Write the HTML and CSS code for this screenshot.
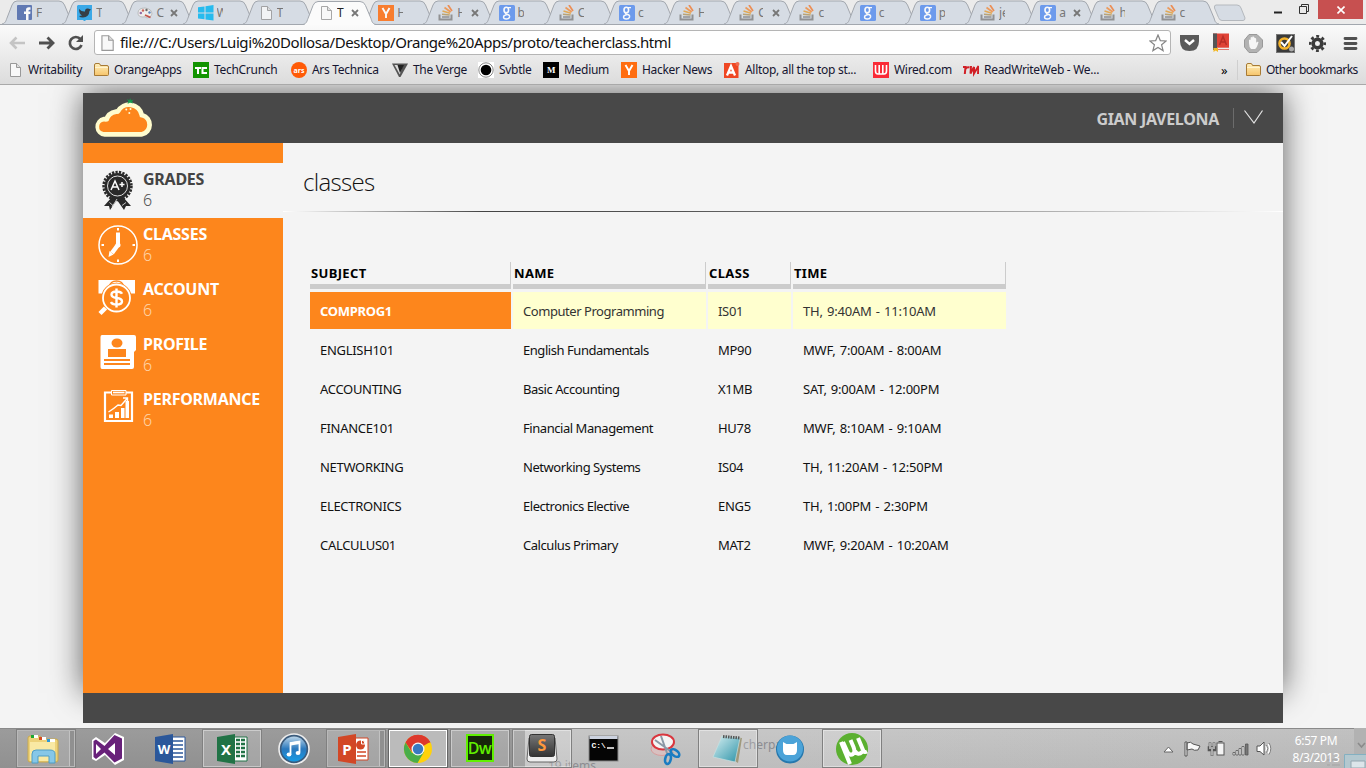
FILE: index.html
```html
<!DOCTYPE html>
<html lang="en">
<head>
<meta charset="utf-8">
<title>Classes</title>
<link rel="stylesheet" href="styles.css">
</head>
<body>
<svg class="defs" width="0" height="0">
  <defs>
    <linearGradient id="gGlass" x1="0" y1="0" x2="0" y2="1"><stop offset="0" stop-color="#b9d4e8"/><stop offset=".5" stop-color="#2a78bd"/><stop offset="1" stop-color="#159be6"/></linearGradient>
    <linearGradient id="gFolder" x1="0" y1="0" x2="0" y2="1"><stop offset="0" stop-color="#fff0bd"/><stop offset="1" stop-color="#f6c46a"/></linearGradient>
    <linearGradient id="gNote" x1="0" y1="0" x2="1" y2="1"><stop offset="0" stop-color="#d8f0f2"/><stop offset="1" stop-color="#2c93a8"/></linearGradient>
    <linearGradient id="gKey" x1="0" y1="0" x2="0" y2="1"><stop offset="0" stop-color="#777"/><stop offset="1" stop-color="#333"/></linearGradient>
  </defs>
  <symbol id="tab" viewBox="0 0 74 24"><path d="M0 24C4 23 4 20 5 18L10 5Q11.500 1 15 1H57Q61 1 62.500 5L68 18C69 21 69 23 73 24" stroke="#a2a7ae"/></symbol>
  <symbol id="page" viewBox="0 0 16 16"><path d="M3.500 1.500H9.500L13.500 5.500V14.500H3.500Z" fill="#f8f8f8" stroke="#999"/><path d="M9.500 1.500V5.500H13.500" fill="#ddd" stroke="#999"/></symbol>
  <symbol id="folder" viewBox="0 0 16 16"><path d="M1.500 13.500V3Q1.500 1.500 3 1.500H6Q7 1.500 7.500 3.500H14Q15.500 3.500 15.500 5V12.500Q15.500 13.500 14.500 13.500Z" fill="url(#gFolder)" stroke="#a77a35"/><path d="M2 5.500H15" stroke="#fff3cf"/></symbol>
  <symbol id="so" viewBox="0 0 16 16"><path d="M1.500 9.500V14.500H13.500V9.500" fill="none" stroke="#858585" stroke-width="2"/><path d="M4 12H11.500" stroke="#858585" stroke-width="1.500"/><path d="M4 9.300L11.700 10" stroke="#b79a60" stroke-width="1.600"/><path d="M4.500 6L12 8.300" stroke="#e5a13b" stroke-width="1.700"/><path d="M6.500 2.500L12.700 7" stroke="#f09045" stroke-width="1.700"/><path d="M10 0L14 6" stroke="#f0803c" stroke-width="1.700"/></symbol>
  <symbol id="goog" viewBox="0 0 16 16"><rect width="16" height="16" rx="1.500" fill="#5a8fee"/><ellipse cx="7.300" cy="5" rx="2.300" ry="2.700" fill="none" stroke="#fff" stroke-width="1.600"/><path d="M9 2.600H12M8 7.500Q5 8.500 7.500 9.300M8 9.300Q11 10 10.600 12Q10 14 7.300 14Q4.500 14 4.500 12Q4.700 10 8 9.500" fill="none" stroke="#fff" stroke-width="1.400"/></symbol>
  <symbol id="yc" viewBox="0 0 16 16"><rect width="16" height="16" fill="#ff6d10"/><path d="M4.500 3L8 9L11.500 3M8 8.500V13" fill="none" stroke="#fff" stroke-width="1.900"/></symbol>
  <symbol id="x" viewBox="0 0 8 8"><path d="M1 1L7 7M7 1L1 7" stroke="#777" stroke-width="1.800"/></symbol>
</svg>

<header class="chrome">
  <div class="tabstrip">
    <div class="tab"><svg class="shape"><use href="#tab"/></svg><svg class="fav" viewBox="0 0 16 16"><rect width="15" height="15" rx="1" fill="#4c68ab"/><path d="M9 15V9H7V6.500H9V5Q9 2.200 12 2.300H13.500V4.700H12.500Q11.500 4.700 11.500 5.700V6.500H13.500L13.200 9H11.500V15Z" fill="#fff"/></svg><span>F</span></div>
    <div class="tab"><svg class="shape"><use href="#tab"/></svg><svg class="fav" viewBox="0 0 16 16"><path d="M1 0H15V15H9L7.500 16.500L6 15H0V1Z" fill="#1f9fe8"/><path d="M2 4Q5 7 8 6.500Q8 3 11 3.500L14 4.500L12.500 6Q12 12 6 12.500Q3 12.500 2 11L5 10.500Q2 9 2 4Z" fill="#19232c"/></svg><span>T</span></div>
    <div class="tab"><svg class="shape"><use href="#tab"/></svg><svg class="fav" viewBox="0 0 16 16"><path d="M1 8Q1 3 8 3Q15 4 15 9Q14 13 10 13Q8 11 6 12Q1 12 1 8Z" fill="#f5f2ee" stroke="#aaa" stroke-width=".8"/><circle cx="3.800" cy="8" r="1.300" fill="#8a5a9a"/><circle cx="6" cy="5.500" r="1.200" fill="#c94e43"/><circle cx="9.500" cy="5" r="1.200" fill="#555"/><circle cx="12.500" cy="7.500" r="1.200" fill="#4474b4"/><path d="M8 10L13.500 12.500" stroke="#c13b2f" stroke-width="1.800"/></svg><span class="wide">C</span><svg class="close"><use href="#x"/></svg></div>
    <div class="tab"><svg class="shape"><use href="#tab"/></svg><svg class="fav" viewBox="0 0 16 16"><path d="M0 2.300L6.500 1.400V7.400H0ZM7.500 1.200L15.500 0V7.400H7.500ZM0 8.400H6.500V14.300L0 13.400ZM7.500 8.400H15.500V15.600L7.500 14.500Z" fill="#08b6f0"/></svg><span>W</span></div>
    <div class="tab"><svg class="shape"><use href="#tab"/></svg><svg class="fav pgfav"><use href="#page"/></svg><span>T</span></div>
    <div class="tab active"><svg class="shape"><use href="#tab"/></svg><svg class="fav"><use href="#page"/></svg><span class="wide">T</span><svg class="close"><use href="#x"/></svg></div>
    <div class="tab"><svg class="shape"><use href="#tab"/></svg><svg class="fav"><use href="#yc"/></svg><span>H</span></div>
    <div class="tab"><svg class="shape"><use href="#tab"/></svg><svg class="fav"><use href="#so"/></svg><span class="wide"><i>H</i></span><svg class="close"><use href="#x"/></svg></div>
    <div class="tab"><svg class="shape"><use href="#tab"/></svg><svg class="fav"><use href="#goog"/></svg><span>b</span></div>
    <div class="tab"><svg class="shape"><use href="#tab"/></svg><svg class="fav"><use href="#so"/></svg><span>C</span></div>
    <div class="tab"><svg class="shape"><use href="#tab"/></svg><svg class="fav"><use href="#goog"/></svg><span>c</span></div>
    <div class="tab"><svg class="shape"><use href="#tab"/></svg><svg class="fav"><use href="#so"/></svg><span>H</span></div>
    <div class="tab"><svg class="shape"><use href="#tab"/></svg><svg class="fav"><use href="#so"/></svg><span class="wide"><i>C</i></span><svg class="close"><use href="#x"/></svg></div>
    <div class="tab"><svg class="shape"><use href="#tab"/></svg><svg class="fav"><use href="#so"/></svg><span>c</span></div>
    <div class="tab"><svg class="shape"><use href="#tab"/></svg><svg class="fav"><use href="#goog"/></svg><span>c</span></div>
    <div class="tab"><svg class="shape"><use href="#tab"/></svg><svg class="fav"><use href="#goog"/></svg><span>p</span></div>
    <div class="tab"><svg class="shape"><use href="#tab"/></svg><svg class="fav"><use href="#so"/></svg><span>je</span></div>
    <div class="tab"><svg class="shape"><use href="#tab"/></svg><svg class="fav"><use href="#goog"/></svg><span class="wide">a</span><svg class="close"><use href="#x"/></svg></div>
    <div class="tab"><svg class="shape"><use href="#tab"/></svg><svg class="fav"><use href="#so"/></svg><span>h</span></div>
    <div class="tab"><svg class="shape"><use href="#tab"/></svg><svg class="fav"><use href="#so"/></svg><span>c</span></div>
    <svg class="newtab" viewBox="0 0 34 18"><path d="M3 1H24Q27 1 28 4L32 14Q32 16.500 30 16.500H9Q6.500 16.500 5.500 13.500L1.500 4Q1 1 3 1Z" fill="#d6dce4" stroke="#b4b8bd"/></svg>
    <div class="winbtns">
      <svg width="40" height="19" viewBox="0 0 40 19"><path d="M0 12.500H8" stroke="#222" stroke-width="2"/><path d="M25.500 6.500H32.500V13.500H25.500ZM27.500 6V4.500H34.500V11.500H33" fill="none" stroke="#333"/></svg>
      <div class="winclose"><svg width="8" height="8" viewBox="0 0 8 8"><path d="M.5 .5L7.500 7.500M7.500 .5L.5 7.500" stroke="#fff" stroke-width="1.600"/></svg></div>
    </div>
  </div>

  <div class="toolbar">
    <svg class="nav" width="84" height="24" viewBox="0 0 84 24" fill="none"><path d="M11 12H25M16.500 6.500L11 12L16.500 17.500" stroke="#c4c4c4" stroke-width="2.600"/><path d="M39 12H53M47.500 6.500L53 12L47.500 17.500" stroke="#505050" stroke-width="2.800"/><path d="M80.500 8.200A6 6 0 1 0 81.500 14" stroke="#505050" stroke-width="2.700"/><path d="M83 4V11H76Z" fill="#505050"/></svg>
    <div class="omnibox">
      <svg class="pg"><use href="#page"/></svg>
      <span class="url">file:///C:/Users/Luigi%20Dollosa/Desktop/Orange%20Apps/proto/teacherclass.html</span>
      <svg class="star" viewBox="0 0 18 18"><path d="M9 1L11.300 6.600L17.200 7L12.600 10.800L14.100 16.600L9 13.500L3.900 16.600L5.400 10.800L.8 7L6.700 6.600Z" fill="#fff" stroke="#858585" stroke-width="1.200"/></svg>
    </div>
    <svg class="exts" width="186" height="24" viewBox="1174 0 186 24">
      <path d="M1180 4H1199V10Q1199 20 1189.500 20Q1180 20 1180 10Z" fill="#5a5a5a"/><path d="M1185 9L1189.500 13L1194 9" fill="none" stroke="#fff" stroke-width="2.400"/>
      <path d="M1213 2.500H1229V19H1213Z" fill="#df4337"/><path d="M1213 2.500H1217V19H1213Z" fill="#555"/><path d="M1219.500 14L1223 5.500L1226.500 14M1221 11H1225" fill="none" stroke="#b72e27" stroke-width="1.500"/><path d="M1217 17.500H1229" stroke="#eee" stroke-width="1.600"/><path d="M1213.500 17H1218V21L1215.800 19.500L1213.500 21Z" fill="#f2b927"/>
      <path d="M1249 3.500H1257L1262.500 9V16L1257 21.500H1249L1244.500 16V9Z" fill="#b2b2b2" stroke="#999"/><path d="M1249 12V9Q1250 8 1250.600 9V6.500Q1252 5.500 1252.500 6.500V5.500Q1254 5 1254.500 6.500V7Q1256 6.500 1256.200 8V12Q1257 10 1258.500 11Q1257 17 1255 18H1251Q1249 16 1249 12Z" fill="#f6f6f6"/>
      <rect x="1276.500" y="3.500" width="18" height="18" fill="#3b3b3b" stroke="#777"/><circle cx="1284.500" cy="12.500" r="5" fill="none" stroke="#f4b32b" stroke-width="2.600"/><path d="M1281 11L1284.500 15L1292 5" fill="none" stroke="#fff" stroke-width="2"/><circle cx="1291.500" cy="18" r="2.500" fill="#aaa"/>
      <circle cx="1317.500" cy="12.500" r="4.300" fill="none" stroke="#3b3b3b" stroke-width="3.600"/><circle cx="1317.500" cy="12.500" r="7.200" fill="none" stroke="#3b3b3b" stroke-width="2.600" stroke-dasharray="2.900 2.750" stroke-dashoffset="1.450"/>
      <path d="M1345 7.500H1356M1345 12.500H1356M1345 17.500H1356" stroke="#505050" stroke-width="2.800" stroke-linecap="round"/>
    </svg>
  </div>

  <nav class="bookmarks">
    <a><svg><use href="#page"/></svg>Writability</a>
    <a><svg><use href="#folder"/></svg>OrangeApps</a>
    <a><svg viewBox="0 0 16 16"><rect width="16" height="16" fill="#129400"/><path d="M2 5H8V7H6V12H4V7H2ZM8.500 5H14V7H10.500V10H14V12H8.500Z" fill="#fff"/></svg>TechCrunch</a>
    <a><svg viewBox="0 0 16 16"><circle cx="8" cy="8" r="8" fill="#ff5a06"/><text x="8" y="10.500" class="arst">ars</text></svg>Ars Technica</a>
    <a><svg viewBox="0 0 16 16"><path d="M0 1.500H16L8.500 15H7Z" fill="#555"/><path d="M2.500 3H11L7.800 12.500Z" fill="#ddd"/><path d="M5.500 3H12L8 11Z" fill="#222"/></svg>The Verge</a>
    <a><svg viewBox="0 0 16 16"><rect width="16" height="16" fill="#fff"/><circle cx="8" cy="8" r="7.200" fill="none" stroke="#888"/><circle cx="8" cy="8" r="5.300"/></svg>Svbtle</a>
    <a><svg viewBox="0 0 16 16"><rect width="16" height="16"/><text x="8" y="11" class="medt">M</text></svg>Medium</a>
    <a><svg><use href="#yc"/></svg>Hacker News</a>
    <a><svg viewBox="0 0 16 16"><rect x="0" y="1" width="14.500" height="15" fill="#ef4723"/><circle cx="13.500" cy="2" r="2" fill="#f06a4d"/><path d="M3 13.500L7 4L11 13.500M5 10.500H9.500" fill="none" stroke="#fff" stroke-width="2.300"/></svg>Alltop, all the top st...</a>
    <a><svg viewBox="0 0 16 16"><rect width="16" height="16" fill="#fa2a36"/><path d="M2.500 3V9Q2.500 12 5 12H11Q13.500 12 13.500 9V3M6.200 3V12M9.800 3V12" fill="none" stroke="#fff" stroke-width="1.600"/></svg>Wired.com</a>
    <a><svg viewBox="0 0 16 16"><path d="M0 5H2.500L1.800 12M2.500 7Q4 4.500 6.500 5.500M8 4L7.500 11.500L11 5L11 11.500L15.500 4L15 12" fill="none" stroke="#d11f26" stroke-width="2"/></svg>ReadWriteWeb - We...</a>
    <b>»</b>
    <a class="other"><svg><use href="#folder"/></svg>Other bookmarks</a>
  </nav>
</header>

<main class="viewport">
  <div class="app">
    <header class="topbar">
      <svg class="logo" width="62" height="42" viewBox="0 0 62 42"><g id="cloud"><path d="M13 35H49.500A7.500 7.500 0 0 0 49.800 20.500A2 2 0 0 1 47.500 18.500A10.500 10.500 0 0 0 28 15.500Q26.500 17.500 24.500 17Q18 18 16.500 24Q15 25 12.500 24.500A5.300 5.300 0 0 0 13 35Z" fill="#fffccd" stroke="#fffccd" stroke-width="9.500" stroke-linejoin="round"/><path d="M11.500 35H49.500A7.500 7.500 0 0 0 49.800 20.500A2 2 0 0 1 47.500 18.500A10.500 10.500 0 0 0 28 15.500Q26.500 17.500 24.500 17Q18 18 16.500 24Q15 25 12 24.500A5.300 5.300 0 0 0 11.500 35Z" fill="#fd861c"/></g><path d="M35 2L37.500 3.500L38 1L39 3.500L41.500 2.500L40 4.500L41 6.500L38 5.500L35.500 7L36.500 4.500Z" fill="#12a04d"/><g fill="#fffbd5"><circle cx="34.300" cy="12.500" r="1"/><circle cx="38.500" cy="12" r="1"/><circle cx="37.300" cy="16" r="1"/></g></svg>
      <div class="user"><span>GIAN JAVELONA</span><svg width="34" height="22" viewBox="0 0 34 22"><path d="M.5 1V21" stroke="#6c6c6c"/><path d="M11.500 3.500L21 16L29.500 3.500" fill="none" stroke="#e4e4e4" stroke-width="1.200"/></svg></div>
    </header>
    <div class="body">
      <aside class="side">
        <a class="item on"><svg viewBox="0 0 46 54"><path d="M17 34L9 43L14 43L15 47L22 37L29 47L31 43H36L28 34" fill="#292929"/><circle cx="22.500" cy="23" r="13.900" fill="none" stroke="#292929" stroke-width="2.600" stroke-dasharray="2.300 1.200"/><circle cx="22.500" cy="23" r="13" fill="#292929"/><circle cx="22.500" cy="23" r="10" fill="none" stroke="#ddd" stroke-width="1"/><path d="M16 27L20 18L24 27M17.500 24H22.500M24.500 21.500H29.500M27 19V24" fill="none" stroke="#fff" stroke-width="1.500"/><path d="M14.500 39.500L18 42.500M27 42.500L31 39.500M22 36L17 44" stroke="#eee" stroke-width=".8"/></svg><div><b>GRADES</b><i>6</i></div></a>
        <a class="item"><svg viewBox="0 0 46 54"><circle cx="23" cy="27" r="19" fill="none" stroke="#fff" stroke-width="1.500"/><path d="M23 10V12.500M23 41.500V44M6.500 27H9M37.500 27H40" stroke="#fff" stroke-width="2"/><path d="M23 14.500V26" stroke="#fff" stroke-width="4"/><path d="M22.500 27.500L17 35" stroke="#fff" stroke-width="4.500"/><circle cx="23" cy="27" r="2.500" fill="#fff"/><path d="M14.500 33L18.500 36.500L13.500 39Z" fill="#fff"/></svg><div><b>CLASSES</b><i>6</i></div></a>
        <a class="item"><svg viewBox="0 0 46 54"><path d="M3.500 7H40V20.500H3.500Z" fill="#fff"/><path d="M14.500 14Q15 8 21.500 8Q28 8 28.500 14" fill="none" stroke="#fd861c" stroke-width="1.300"/><path d="M18 13Q21.500 8 25 13" fill="none" stroke="#fd861c" stroke-width="1.500"/><circle cx="21.500" cy="25" r="14" fill="#fd861c" stroke="#fd861c" stroke-width="2.500"/><circle cx="21.500" cy="25" r="13.500" fill="none" stroke="#fff" stroke-width="1.800"/><path d="M27 20.800Q26 18.500 21.500 18.500Q16.500 18.500 16.500 21.500Q16.500 24.300 21.500 25Q27 25.500 27 28.500Q27 31.500 21.500 31.500Q17 31.500 16 29M21.500 15.500V34.500" fill="none" stroke="#fff" stroke-width="2.400"/><path d="M10.500 35L5 40.500" stroke="#fff" stroke-width="4.500"/></svg><div><b>ACCOUNT</b><i>6</i></div></a>
        <a class="item"><svg viewBox="0 0 46 54"><path d="M7 7H39Q41 7 41 9V22L39 24V39Q39 41 37 41H7Q5.500 41 5.500 39V9Q5.500 7 7 7Z" fill="#fff"/><g fill="#fd861c"><ellipse cx="22" cy="15" rx="5.500" ry="4.500"/><path d="M13 21H31V29H13ZM9 31H35V33H9ZM9 35H35V37H9Z"/></g></svg><div><b>PROFILE</b><i>6</i></div></a>
        <a class="item"><svg viewBox="0 0 46 54"><path d="M10 9.500H37V38H10Z" fill="none" stroke="#fff" stroke-width="2.200"/><path d="M16.500 7.500H31V12H16.500Z" fill="#fd861c" stroke="#fff"/><path d="M18 9.500H29.500" stroke="#fff" stroke-width="1.600"/><path d="M14 35V31.500H18V35ZM20 35V29H24V35ZM26 35V25H29.500V35ZM30.500 35V18H34V35Z" fill="#fff"/><path d="M13.500 29Q19 25.500 23 22L26 22.500L32.500 15M28 15H32.500V19" fill="none" stroke="#fff" stroke-width="1.400"/></svg><div><b>PERFORMANCE</b><i>6</i></div></a>
      </aside>
      <section class="content">
        <h1>classes</h1>
        <div class="rule"></div>
        <div class="table">
          <div class="row head"><b>SUBJECT</b><b>NAME</b><b>CLASS</b><b>TIME</b></div>
          <div class="row hot"><span>COMPROG1</span><span>Computer Programming</span><span>IS01</span><span>TH, 9:40AM - 11:10AM</span></div>
          <div class="row"><span>ENGLISH101</span><span>English Fundamentals</span><span>MP90</span><span>MWF, 7:00AM - 8:00AM</span></div>
          <div class="row"><span>ACCOUNTING</span><span>Basic Accounting</span><span>X1MB</span><span>SAT, 9:00AM - 12:00PM</span></div>
          <div class="row"><span>FINANCE101</span><span>Financial Management</span><span>HU78</span><span>MWF, 8:10AM - 9:10AM</span></div>
          <div class="row"><span>NETWORKING</span><span>Networking Systems</span><span>IS04</span><span>TH, 11:20AM - 12:50PM</span></div>
          <div class="row"><span>ELECTRONICS</span><span>Electronics Elective</span><span>ENG5</span><span>TH, 1:00PM - 2:30PM</span></div>
          <div class="row"><span>CALCULUS01</span><span>Calculus Primary</span><span>MAT2</span><span>MWF, 9:20AM - 10:20AM</span></div>
        </div>
      </section>
    </div>
  </div>
  <footer class="foot"></footer>
</main>

<footer class="taskbar">
  <div class="ghost g1">19 items</div><div class="ghost g2">cherpa</div>
  <div class="task open stack"><svg viewBox="0 0 34 34"><path d="M2 6Q2 4 4 4H14L16 7H30Q32 7 32 9V28Q32 30 30 30H4Q2 30 2 28Z" fill="#edd27a" stroke="#c9a94d"/><path d="M4 10H29V29H4Z" fill="#f9e9a4"/><path d="M5 4.500H12" stroke="#fff" stroke-width="3"/><path d="M5 4.500H8" stroke="#1ca831" stroke-width="3"/><path d="M13 6.500H20" stroke="#fff" stroke-width="3"/><path d="M13 6.500H16" stroke="#d54a20" stroke-width="3"/><path d="M21 8.500H29" stroke="#fff" stroke-width="3"/><path d="M21 8.500H24" stroke="#2b98d8" stroke-width="3"/><path d="M6 31V22Q6 18 10 18H24Q29 18 29 22V31H23V24H12V31Z" fill="#86c7e8" stroke="#4f9dc5"/></svg></div>
  <div class="task"><svg viewBox="0 0 34 34"><path d="M24 1L33 5V28L24 33L14 23L5 29L1 27V8L5 5L14 11Z" fill="#fff"/><path d="M23.500 3L31 6.500V26.500L23.500 30.500L13.500 20.500L5 27L2.500 25V9L5 7.500L13.500 14ZM24 11L17 17L24 23ZM5 12V22L10 17Z" fill="#68217a" fill-rule="evenodd"/></svg></div>
  <div class="task"><svg viewBox="0 0 34 34"><path d="M19 5H32V29H19Z" fill="#fff" stroke="#2b579a"/><path d="M20 9H30M20 13H30M20 17H30M20 21H30M20 25H30" stroke="#2b579a" stroke-width="1.500"/><path d="M2 5L20 2V32L2 29Z" fill="#2b579a"/><text x="11" y="22" class="office word">W</text></svg></div>
  <div class="task open"><svg viewBox="0 0 34 34"><path d="M19 5H32V29H19Z" fill="#fff" stroke="#217346"/><path d="M21 8H30M21 12H30M21 16H30M21 20H30M21 24H30" stroke="#217346" stroke-width="2.500"/><path d="M25.500 6V28" stroke="#fff"/><path d="M2 5L20 2V32L2 29Z" fill="#217346"/><text x="11" y="22.500" class="office">X</text></svg></div>
  <div class="task"><svg viewBox="0 0 34 34"><circle cx="17" cy="17" r="15" fill="#3b5b7c" stroke="#eee" stroke-width="1.600"/><circle cx="17" cy="17" r="12.500" fill="url(#gGlass)"/><path d="M13.500 22.500V11L22.500 9.500V20.500" fill="none" stroke="#fff" stroke-width="1.800"/><path d="M13.500 12L22.500 10.500" stroke="#fff" stroke-width="3"/><ellipse cx="12" cy="22.500" rx="2.400" ry="2" fill="#fff"/><ellipse cx="21" cy="21" rx="2.400" ry="2" fill="#fff"/></svg></div>
  <div class="task open stack"><svg viewBox="0 0 34 34"><path d="M19 6H32V28H19Z" fill="#fff" stroke="#d24726"/><circle cx="24.500" cy="13" r="4.500" fill="#d24726"/><path d="M25.500 12V8A4 4 0 0 1 29 12Z" fill="#d24726" stroke="#fff"/><path d="M21 20H30M21 24H30" stroke="#d24726" stroke-width="1.500"/><path d="M2 5L20 2V32L2 29Z" fill="#d24726"/><text x="11" y="22.500" class="office">P</text></svg></div>
  <div class="task open current"><svg viewBox="0 0 34 34"><circle cx="17" cy="17" r="14" fill="#ffd20b"/><path d="M17 17L4.900 10A14 14 0 0 1 29.100 10Z" fill="#dd382c"/><path d="M17 10.500H29.500A14 14 0 0 0 4.500 10.500L11 20Z" fill="#dd382c"/><path d="M4.500 10.500A14 14 0 0 0 16.500 31L23 20L11 21Z" fill="#49ad4a"/><circle cx="17" cy="17" r="6.500" fill="#f5f5f5"/><circle cx="17" cy="17" r="5.200" fill="#3979c1"/></svg></div>
  <div class="task open"><svg viewBox="0 0 34 34"><rect x="4" y="3" width="26" height="26" fill="#17270a" stroke="#60f000" stroke-width="2"/><text x="16.500" y="21.500" class="dw">Dw</text></svg></div>
  <div class="task open"><svg viewBox="0 0 34 34"><path d="M4 6L2 27Q2 30 5 30H29Q32 30 32 27L30 6Z" fill="#eee" stroke="#666"/><rect x="4.500" y="2.500" width="25" height="22" rx="2" fill="url(#gKey)" stroke="#333"/><text x="17" y="18.500" class="sub">S</text></svg></div>
  <div class="task"><svg viewBox="0 0 34 34"><rect x="2" y="4" width="29" height="25" fill="#050505" stroke="#888"/><path d="M2.500 5.500H30.500" stroke="#ccd2df" stroke-width="3"/><text x="4.500" y="16" class="cmd">C:\</text><path d="M20 16H27" stroke="#fff" stroke-width="1.500"/></svg></div>
  <div class="task"><svg viewBox="0 0 34 34"><ellipse cx="13" cy="17" rx="11" ry="6.500" fill="#d8c0c0" stroke="#d99b9b"/><ellipse cx="14" cy="10" rx="11" ry="7.500" fill="#f4f4f4" stroke="#d9363e" stroke-width="2"/><path d="M6 8L24 21M12 4L19 24" stroke="#8b98a5" stroke-width="2"/><g fill="none" stroke="#197cc2" stroke-width="2.600"><ellipse cx="26" cy="21" rx="5" ry="2.800" transform="rotate(38 26 21)"/><ellipse cx="19" cy="27" rx="2.800" ry="5" transform="rotate(12 19 27)"/></g></svg></div>
  <div class="task open"><svg viewBox="0 0 34 34"><path d="M11 4L31 6L27 31L24 29Z" fill="#a0997c"/><path d="M11 4L29 6L24 30L2 25Z" fill="url(#gNote)" stroke="#c9e0e0" stroke-width=".7"/><path d="M12 4.500L29 6" stroke="#555" stroke-width="3" stroke-dasharray="1.500 1"/></svg></div>
  <div class="task"><svg viewBox="0 0 34 34"><circle cx="17" cy="17.500" r="14" fill="#2678ad"/><circle cx="17" cy="16.500" r="13" fill="#4ba3d8"/><path d="M10 10L13.500 12H20.500L24 10V18Q24 23 20 23H14Q10 23 10 18Z" fill="#fff"/></svg></div>
  <div class="task open"><svg viewBox="0 0 34 34"><circle cx="17" cy="17" r="16" fill="#5bb030"/><path d="M6 10L15 32" stroke="#fff" stroke-width="4"/><path d="M8 10L12.500 20Q15 24 18 22Q20.500 20 18.500 15L15.500 8M20 19Q23 24 27 20M23 6L28 18Q29 21 32 19.500" fill="none" stroke="#fff" stroke-width="4"/></svg></div>
  <div class="tray">
    <svg width="112" height="20" viewBox="0 0 112 20"><path d="M1 13L5.500 8L10 13Z" fill="#fff" stroke="#666"/><path d="M22 3H24V17H22ZM24 4Q28 2 30 5L37 7L35 11Q31 12 29 10L24 11Z" fill="#f8f8f8" stroke="#555"/><rect x="54" y="4" width="7" height="12" fill="#f4f4f4" stroke="#555"/><path d="M55.500 2.500H59.500" stroke="#555"/><path d="M47 3.500V8M51 3.500V8M46 8.500H52V11H46ZM49 11V17" fill="none" stroke="#555" stroke-width="2.600"/><path d="M47 4V8M51 4V8M46 9H52M49 10V16.500" fill="none" stroke="#fff"/><g fill="#fff" stroke="#555" stroke-width=".8"><path d="M70 13.500H72V16H70ZM73 11.500H75V16H73ZM76 9.500H78V16H76ZM79 7.500H81V16H79Z"/><path d="M82.500 5H85V16H82.500Z" fill="#777"/></g><path d="M94 7H97L101 3V16L97 12.500H94Z" fill="#fff" stroke="#555"/><path d="M103 7Q104.500 9.500 103 12.500M105.500 5Q108 9.500 105.500 14.500" fill="none" stroke="#fff" stroke-width="2"/><path d="M103.500 6Q106 9.500 103.500 13.500M106 4Q109.500 9.500 106 15.500" fill="none" stroke="#666" stroke-width=".8"/></svg>
    <div class="clock"><div>6:57 PM</div><div>8/3/2013</div></div>
    <svg class="corner" width="40" height="40" viewBox="0 0 40 40"><path d="M28 0H40V26H28Z" fill="#b2b2b2"/><path d="M32 15L35.500 19L39 15" fill="none" stroke="#8b8b8b" stroke-width="1.600"/><path d="M18.500 26.500H41V41H18.500Z" fill="#b3c8cf" stroke="#83b0c1"/><path d="M25 33H39V40H25Z" fill="#dce5ea" stroke="#94a7b0"/><path d="M1 32H4M6 32H14M1 37H4M6 37H14" stroke="#a3a3a3"/></svg>
  </div>
</footer>
</body>
</html>
```
FILE: styles.css
```css
* { box-sizing: border-box; }
body {
  margin: 0; width: 1366px; height: 768px; overflow: hidden;
  display: flex; flex-direction: column;
  background: #f4f4f4;
  font-family: "Noto Sans", "Open Sans", sans-serif;
}
i { font-style: normal; }
svg { display: block; flex: none; }
.defs { position: absolute; }

/* browser frame */
.chrome { height: 85px; flex: none; display: flex; flex-direction: column; border-bottom: 1px solid #a9a9a9; background: linear-gradient(#fbfbfb 24px, #dcdcdc); position: relative; z-index: 2; }
.tabstrip { height: 25px; flex: none; display: flex; padding-left: 2px; background: #ebebeb; border-bottom: 1px solid #a2a7ae; }
.tab { position: relative; width: 60.2px; height: 25px; flex: none; display: flex; align-items: center; padding-left: 15px; isolation: isolate; }
.shape { position: absolute; left: 0; top: 0; width: 74px; height: 24px; z-index: -1; fill: #d6dce4; }
.active { z-index: 2; }
.active .shape { fill: #fbfbfb; height: 25px; }
.active::after { content: ""; position: absolute; left: 2px; right: -11px; bottom: 0; height: 1px; background: #fbfbfb; z-index: -1; }
.fav { width: 16px; height: 16px; opacity: .85; }
.tab span { width: 6px; margin-left: 3px; overflow: hidden; font-size: 12px; line-height: 17px; color: #777; white-space: nowrap; }
.tab .wide { width: 8px; }
.tab .wide i { display: block; width: 5px; overflow: hidden; }
.active .wide { color: #222; }
.close { width: 8px; height: 8px; margin-left: 6px; }
.newtab { width: 34px; height: 18px; margin: 4px 0 0 7px; }
.winbtns { margin-left: auto; display: flex; padding-right: 3px; }
.winbtns > svg { margin-right: 4px; }
.winclose { width: 45px; height: 19px; background: #c75050; display: flex; align-items: center; justify-content: center; }

.toolbar { height: 35px; flex: none; display: flex; align-items: center; }
.omnibox { width: 1077px; height: 25px; margin-left: 10px; display: flex; align-items: center; background: #fff; border: 1px solid #b5b5b5; border-radius: 3px; }
.pg { width: 18px; height: 18px; margin-left: 3px; }
.url { margin: -2px 0 0 4px; font-size: 15px; letter-spacing: -.42px; color: #111; white-space: nowrap; }
.star { width: 18px; height: 18px; margin-left: auto; margin-right: 3px; }
.exts { margin-left: 3px; }

.bookmarks { height: 20px; display: grid; padding-left: 7px; align-items: center; grid-template-columns: 86px 100px 98px 101px 86px 65px 78px 103px 149px 90px 259px 15px 120px; }
.bookmarks a { display: flex; align-items: center; font-size: 12px; line-height: 20px; letter-spacing: -.3px; color: #151530; white-space: nowrap; }
.bookmarks svg { width: 16px; height: 16px; margin-right: 5px; }
.bookmarks b { font-size: 13px; font-weight: 400; line-height: 20px; margin-left: -1px; }
.bookmarks .other { padding-left: 7px; border-left: 1px solid #cfcfcf; letter-spacing: -.5px; }
.arst { font: bold 7px "Noto Sans", sans-serif; fill: #fff; text-anchor: middle; letter-spacing: 0; }
.medt { font: bold 9px "Liberation Serif", serif; fill: #fff; text-anchor: middle; }

/* page */
.viewport { height: 643px; flex: none; padding: 8px 83px 0; overflow: hidden; }
.app { width: 1200px; height: 600px; box-shadow: 0 0 30px rgba(0,0,0,.62); }
.foot { width: 1200px; height: 30px; background: #484848; position: relative; }
.topbar { height: 50px; background: #484848; display: flex; justify-content: space-between; align-items: center; padding: 0 16px 0 9px; }
.user { display: flex; align-items: center; color: #ccc; font-weight: 700; font-size: 16px; letter-spacing: -.3px; }
.user span { padding-top: 2px; }
.user svg { margin-left: 14px; }
.body { display: flex; height: 550px; }
.side { width: 200px; background: #fd861c; padding-top: 20px; }
.item { height: 55px; display: flex; color: #fff; }
.item svg { width: 46px; height: 54px; margin-left: 12px; }
.item div { display: flex; flex-direction: column; padding: 6px 0 0 2px; }
.item b { font-size: 16px; line-height: 21px; font-weight: 700; letter-spacing: -.25px; }
.item i { font-size: 16px; line-height: 21px; font-weight: 300; color: #ffd3a6; }
.on { background: #f4f4f4; color: #444; }
.on i { color: #555; }
.content { width: 1000px; background: #f4f4f4; }
h1 { margin: 0; padding: 20px 0 0 20px; height: 68px; font-size: 24px; line-height: 38px; font-weight: 300; letter-spacing: -.7px; color: #111; font-family: "Open Sans", sans-serif; }
.rule { height: 1px; background: linear-gradient(90deg, #fff 0, #eee 2%, #444 20%, #555 40%, #aaa 75%, #eee 95%, #fff); }
.table { padding: 50px 0 0 27px; }
.row { display: grid; grid-template-columns: 201px 193px 83px 213px; column-gap: 2px; height: 37px; margin-bottom: 2px; font-size: 13px; line-height: 37px; color: #111; }
.row span { height: 37px; padding: 1px 0 0 10px; white-space: nowrap; letter-spacing: -.3px; }
.row span:nth-child(2) { letter-spacing: -.45px; }
.row span:nth-child(4) { letter-spacing: -.2px; word-spacing: 1px; }
.head { height: 26px; margin-bottom: 4px; line-height: 22px; color: #000; }
.head b { padding-left: 1px; font-weight: 700; letter-spacing: .35px; border-bottom: 5px solid #ccc; background: linear-gradient(#ccc, #ccc) right / 1px 100% no-repeat; }
.hot { color: #333; }
.hot span { background: #ffffcf; }
.hot span:first-child { background: #fd861c; color: #fff; font-weight: 700; }

/* taskbar */
.taskbar { position: relative; height: 40px; flex: none; display: flex; gap: 2px; padding-left: 16px; border-top: 1px solid #8a8a8a; background: linear-gradient(rgba(255,255,255,.06), rgba(0,0,0,.03)), linear-gradient(90deg, #959595 0 525px, #c3c3c3 525px 800px, #bdbdbd); }
.task { position: relative; width: 60px; height: 39px; flex: none; display: flex; align-items: center; justify-content: center; border: 1px solid transparent; }
.task svg { width: 34px; height: 34px; }
.open { border-color: #808080; background: rgba(255,255,255,.17); box-shadow: inset 0 0 0 1px rgba(255,255,255,.4); }
.stack { padding-right: 6px; box-shadow: inset 0 0 0 1px #b9b9b9, inset -5px 0 0 #909090, inset -6px 0 0 #c2c2c2; }
.current { border-color: #666; background: #bbb; box-shadow: inset 0 0 0 1px #fff; }
.office { font: bold 15px "Noto Sans", sans-serif; fill: #fff; text-anchor: middle; }
.word { font-size: 13px; }
.dw { font: 600 16px "Open Sans", sans-serif; fill: #60f000; text-anchor: middle; letter-spacing: -.7px; }
.sub { font: bold 16px "Noto Sans", sans-serif; fill: #ff983c; text-anchor: middle; }
.cmd { font: bold 8px "Liberation Mono", monospace; fill: #fff; }
.ghost { position: absolute; font-size: 12px; line-height: 16px; color: #8c8c91; }
.g1 { left: 548px; top: 29px; }
.g2 { left: 743px; top: 8px; }
.tray { position: relative; margin-left: auto; display: flex; align-items: center; width: 203px; }
.clock { margin-left: 13px; width: 56px; font-size: 12px; line-height: 17px; text-align: center; color: #fff; letter-spacing: -.4px; white-space: nowrap; z-index: 1; }
.corner { position: absolute; right: 0; top: -1px; }
```
